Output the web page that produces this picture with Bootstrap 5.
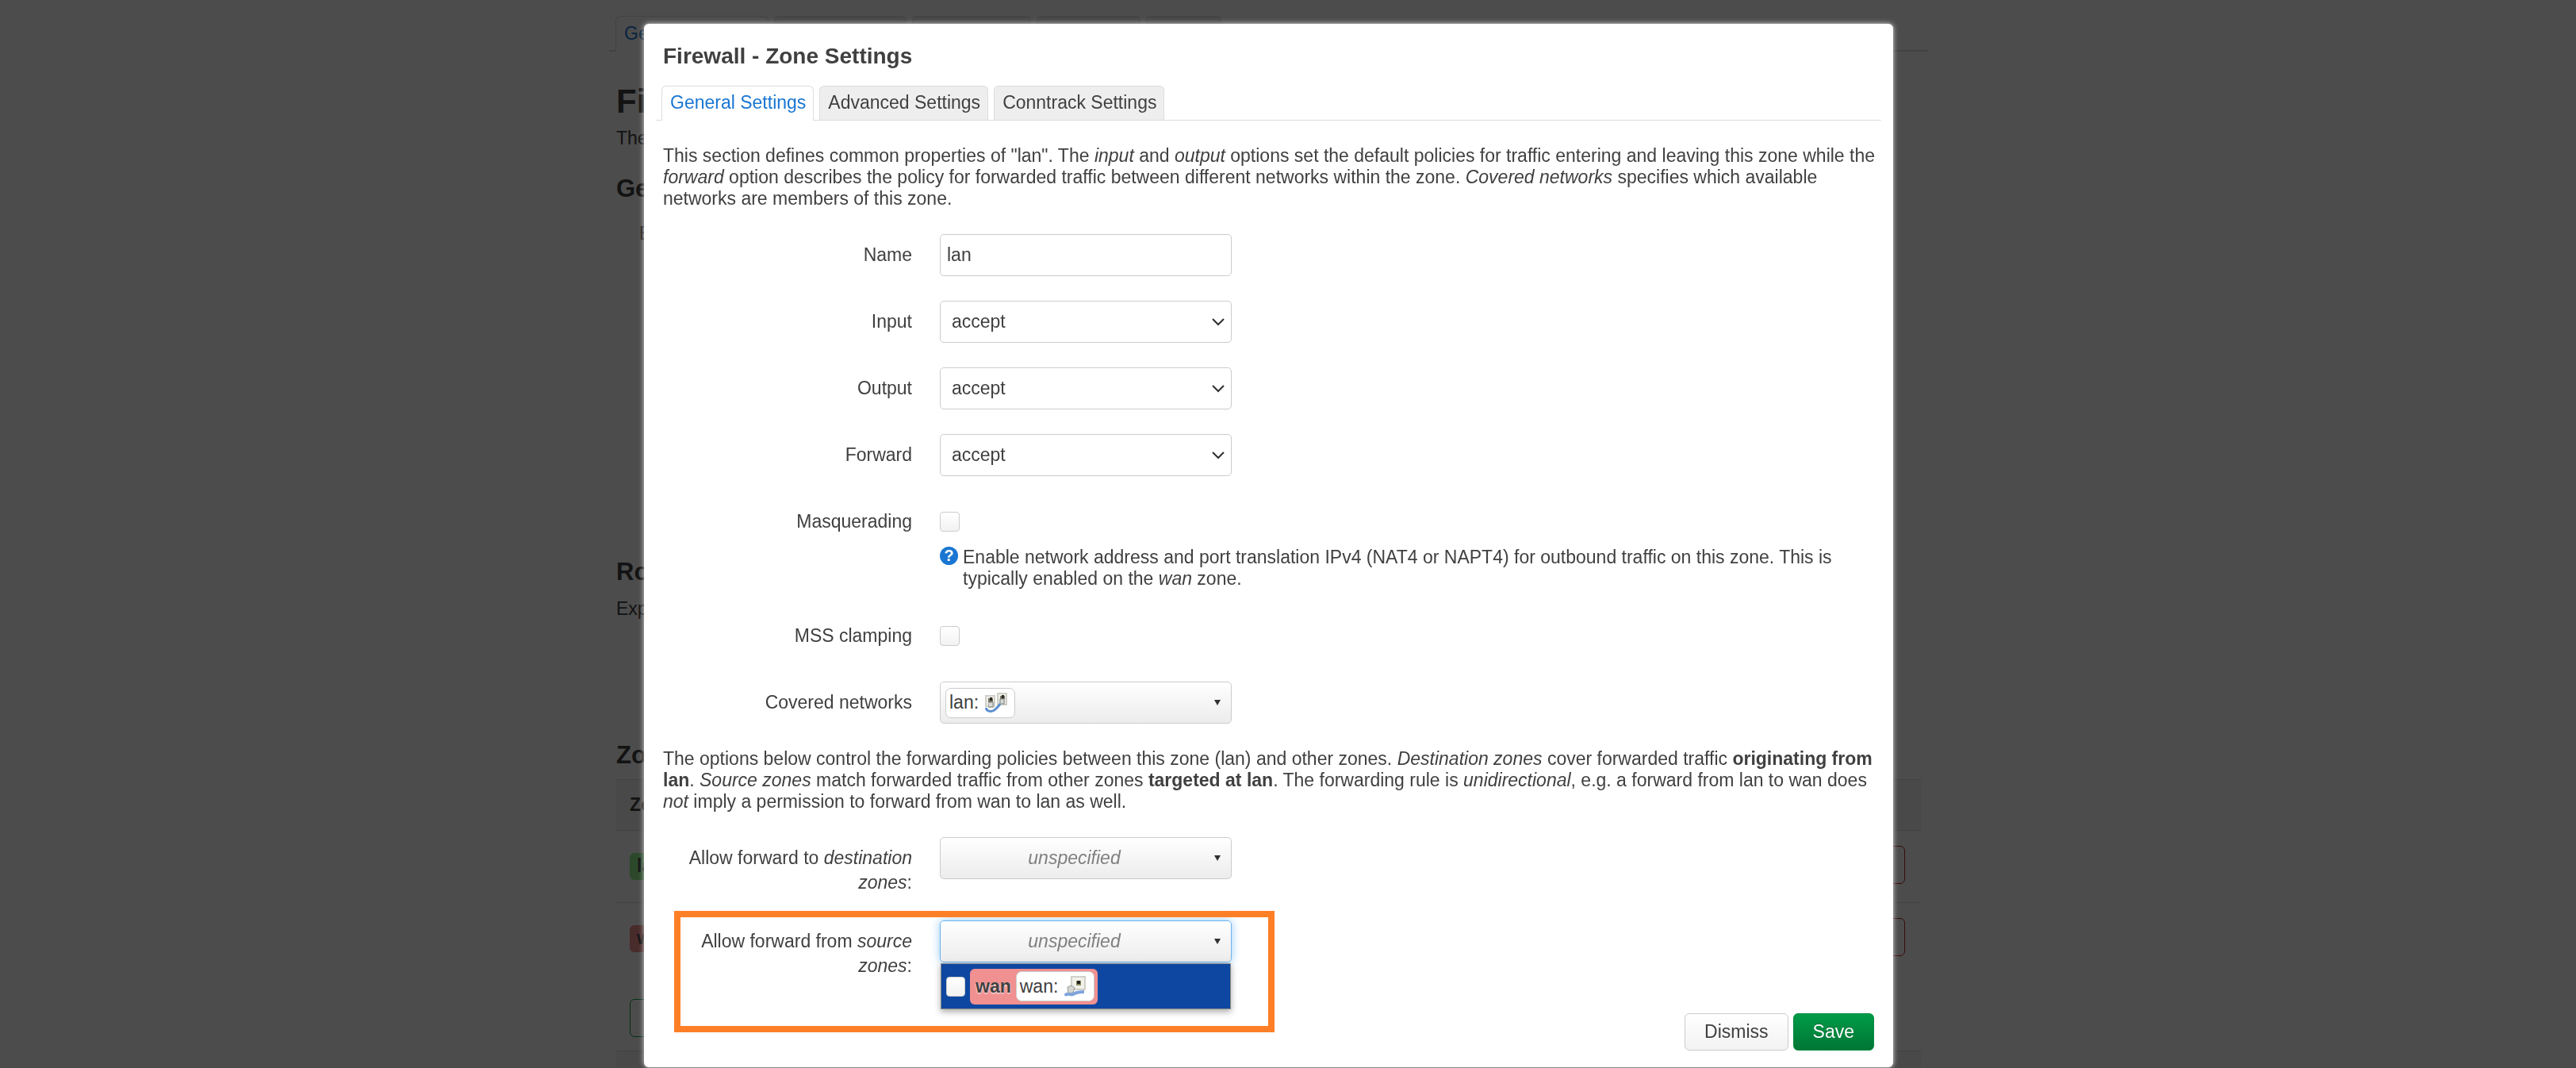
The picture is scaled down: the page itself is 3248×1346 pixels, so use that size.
<!DOCTYPE html>
<html lang="en">
<head>
<meta charset="utf-8">
<meta name="viewport" content="width=device-width, initial-scale=1">
<title>Firewall - Zone Settings</title>
<link href="https://cdn.jsdelivr.net/npm/bootstrap@5.3.0/dist/css/bootstrap.min.css" rel="stylesheet">
<style>
body{font-family:"Liberation Sans",Arial,sans-serif;font-size:23px;line-height:27px;color:#404040;background:#fff;overflow:hidden;height:100vh}
p{margin:0 0 31px}
.frame-pad{padding-right:49px}
.page-wrap{max-width:1645px;margin:0 auto;padding-top:20px}
.lu-tabs{border-bottom:2px solid #ddd;gap:7px;margin:0 -9px;padding-left:8px}
.lu-tabs .nav-link{border:1px solid #ddd;border-bottom:0;border-radius:6px 6px 0 0;background:#eee;color:#404040;padding:8px 10px 7px;line-height:27px;margin:0}
.lu-tabs .nav-link.active{background:#fff;color:#1976d2;margin-bottom:-2px;padding-bottom:9px}
.dlg .lu-tabs{border-bottom-width:1px;margin:0 -9px 31px;padding-left:7px}
.dlg .lu-tabs .nav-link{padding:7px 9px 8px 10px}
.dlg .lu-tabs .nav-link.active{margin-bottom:-1px;padding-bottom:9px}
.page-title{font-size:42px;line-height:50px;font-weight:700;margin:38px 0 8px}
.sect-title{font-size:31px;line-height:36px;font-weight:700;margin:0}
.intro{margin-bottom:32px}
.flag-row{margin:25px 0 395px 29px}
.note{margin:15px 0 153px}
.zone-table{margin:12px 0 0;--bs-table-bg:transparent;color:#404040}
.zone-table td,.zone-table th{border-top:1px solid #ddd;border-bottom:0;padding:19px 20px 19px 17px;vertical-align:middle}
.zone-table th{background:#f5f5f5;height:64px;padding:0 17px}
.zone-table tr.entry td{height:87px}
.zone-tag{display:inline-block;border-radius:6px;padding:3px 9px 4px;font-weight:700}
.zone-tag.green{background:#90f090}
.zone-tag.red{background:#f09090}
.ghost-btn{background:#fff;border:1px solid #c0281f;border-radius:6px;height:48px;width:120px}
.ghost-btn.add{border-color:#00a04a}
.add-row{padding:31px 17px 17px}
.action-band{background:#f5f5f5;border-top:1px solid #ddd;height:64px}
.veil{position:fixed;inset:0;background:rgba(0,0,0,.7)}
.dlg-host{position:fixed;inset:0;padding:30px 49px 0 0;overflow:hidden}
.dlg{max-width:1575px;margin:0 auto;background:#fff;border-radius:6px;padding:23px 24px 21px;box-shadow:0 0 6px rgba(255,255,255,.8)}
.dlg h1{font-size:28px;line-height:36px;font-weight:700;margin:0 0 19px}
.dlg p{margin-right:-10px}
.opt{display:flex;gap:35px;margin-bottom:31px;min-height:53px}
.opt-name{flex:0 0 314px;text-align:right;line-height:31px;padding:11px 0 1px}
.opt-body{flex:1 1 0;position:relative}
.ctl{width:368px;height:53px;border:1px solid #ccc;border-radius:5px;color:#404040;font-size:23px;line-height:27px;padding:12px 8px;display:block}
select.ctl{padding:12px 40px 12px 14px;background:#fff url("data:image/svg+xml,%3Csvg xmlns='http://www.w3.org/2000/svg' viewBox='0 0 16 10'%3E%3Cpath fill='none' stroke='%23303030' stroke-width='2' d='M1 1l7 7 7-7'/%3E%3C/svg%3E") no-repeat right 8px center/16px 10px}
.combo{background:linear-gradient(#fff,#ececec);display:flex;align-items:center;padding:0 13px 0 6px;text-align:left}
.combo.open{border-color:#6cb2ee;box-shadow:0 0 12px rgba(82,168,236,.6)}
.combo .ph{flex:1;text-align:center;font-style:italic;color:#808080;padding-right:14px}
.caret{width:8px;height:7px;background:#303030;clip-path:polygon(0 0,100% 0,50% 100%);margin-left:auto}
.tick{appearance:none;display:block;width:25px;height:25px;border:1px solid #ccc;border-radius:4px;background:linear-gradient(#fff,#f2f2f2);margin:0;flex:none}
.opt-body>.tick{margin:14px 0}
.opt-body>.tick+.hint{margin-top:19px}
.hint{max-width:1150px;gap:6px;padding-bottom:1px}
.q{flex:0 0 23px;height:23px;line-height:23px;border-radius:50%;background:#1976d2;color:#fff;font-size:20px;font-weight:700;text-align:center}
.net{display:inline-flex;align-items:center;gap:8px;height:38px;border:1px solid #ccc;border-radius:7px;background:#fff;padding:0 9px 0 4px;color:#404040;line-height:27px}
.net svg{width:28px;height:28px}
.pick{position:absolute;z-index:2;left:1px;top:54px;width:366px;height:58px;background:#0d47a1;border:1px solid #888;box-shadow:0 3px 8px rgba(0,0,0,.35);padding:0 6px;gap:6px}
.pick .tick{width:24px}
.zone-chip{height:45px;border-radius:6px;background:#f09090;padding:0 4px 0 7px;gap:6px;font-weight:700;text-shadow:0 1px 2px #fff}
.zone-chip .net{font-weight:400;text-shadow:none}
.marked{position:relative}
.marker{position:absolute;z-index:3;left:14px;top:-12px;width:757px;height:153px;border:8px solid #ff7f27;pointer-events:none}
.foot{padding-top:12px;gap:6px}
.foot .btn{font-size:23px;line-height:27px;padding:9px 24px;border-radius:6px;border:1px solid #ccc;color:#404040;background:linear-gradient(#fff,#f2f2f2)}
.foot .btn.go{color:#fff;border-color:#008a3e;background:linear-gradient(#009c48,#007635);text-shadow:0 -1px 0 rgba(0,0,0,.25)}
</style>
<script src="https://cdn.jsdelivr.net/npm/bootstrap@5.3.0/dist/js/bootstrap.bundle.min.js"></script>
</head>
<body>
<div class="frame-pad">
  <main class="page-wrap">
    <nav class="nav lu-tabs" aria-label="Firewall pages">
      <a class="nav-link active" href="#">General Settings</a>
      <a class="nav-link" href="#">Port Forwards</a>
      <a class="nav-link" href="#">Traffic Rules</a>
      <a class="nav-link" href="#">NAT Rules</a>
      <a class="nav-link" href="#">IP Sets</a>
    </nav>
    <h2 class="page-title">Firewall</h2>
    <p class="intro">The firewall</p>
    <h3 class="sect-title">General</h3>
    <p class="flag-row">Enable</p>
    <h3 class="sect-title">Routing</h3>
    <p class="note">Experimental</p>
    <h3 class="sect-title">Zones</h3>
    <table class="table zone-table">
      <thead><tr><th>Zone</th><th></th></tr></thead>
      <tbody>
        <tr class="entry"><td><span class="zone-tag green">lan</span></td><td class="text-end"><button class="ghost-btn" type="button" aria-label="Delete lan"></button></td></tr>
        <tr class="entry"><td><span class="zone-tag red">wan</span></td><td class="text-end"><button class="ghost-btn" type="button" aria-label="Delete wan"></button></td></tr>
      </tbody>
    </table>
    <div class="add-row d-flex"><button class="ghost-btn add" type="button" aria-label="Add"></button></div>
    <div class="action-band"></div>
  </main>
</div>
<div class="veil"></div>
<div class="dlg-host">
  <section class="dlg" role="dialog" aria-labelledby="dlg-title">
    <h1 id="dlg-title">Firewall - Zone Settings</h1>
    <nav class="nav lu-tabs" aria-label="Zone settings">
      <a class="nav-link active" href="#">General Settings</a>
      <a class="nav-link" href="#">Advanced Settings</a>
      <a class="nav-link" href="#">Conntrack Settings</a>
    </nav>
    <p>This section defines common properties of "lan". The <em>input</em> and <em>output</em> options set the default policies for traffic entering and leaving this zone while the <em>forward</em> option describes the policy for forwarded traffic between different networks within the zone. <em>Covered networks</em> specifies which available networks are members of this zone.</p>
    <div class="opt"><label class="opt-name" for="f-name">Name</label><div class="opt-body"><input id="f-name" class="ctl" type="text" value="lan"></div></div>
    <div class="opt"><label class="opt-name" for="f-in">Input</label><div class="opt-body"><select id="f-in" class="form-select ctl"><option>accept</option></select></div></div>
    <div class="opt"><label class="opt-name" for="f-out">Output</label><div class="opt-body"><select id="f-out" class="form-select ctl"><option>accept</option></select></div></div>
    <div class="opt"><label class="opt-name" for="f-fwd">Forward</label><div class="opt-body"><select id="f-fwd" class="form-select ctl"><option>accept</option></select></div></div>
    <div class="opt"><label class="opt-name" for="f-masq">Masquerading</label><div class="opt-body"><input id="f-masq" class="tick" type="checkbox">
      <div class="hint d-flex"><span class="q">?</span><span>Enable network address and port translation IPv4 (NAT4 or NAPT4) for outbound traffic on this zone. This is typically enabled on the <em>wan</em> zone.</span></div></div></div>
    <div class="opt"><label class="opt-name" for="f-mss">MSS clamping</label><div class="opt-body"><input id="f-mss" class="tick" type="checkbox"></div></div>
    <div class="opt"><label class="opt-name" for="f-net">Covered networks</label><div class="opt-body">
      <button id="f-net" class="ctl combo" type="button"><span class="net">lan:
        <svg viewBox="0 0 28 28" aria-hidden="true">
          <path d="M0 4h13v15H0zM15 1h13v16H15z" fill="#cfcfc8"/>
          <path d="M2 6h9v11H2zM17 3h9v12h-9z" fill="#efefe8"/>
          <path d="M4 8h6v5H4zM19 5h6v5h-6z" fill="#77776a"/>
          <path d="M6 7h3v4H6zM21 4h3v4h-3z" fill="#2c2c22"/>
          <path d="M4 13h7v7H4zM18 9h7v7h-7z" fill="#a9ada9"/>
          <path d="M5 14h4v4H5zM20 10h3v4h-3z" fill="#d9dcd9"/>
          <path d="M1 20c1 5 8 6 12 2s5-5 6-7" fill="none" stroke="#5b8fd0" stroke-width="3"/></svg></span><span class="caret"></span></button></div></div>
    <p>The options below control the forwarding policies between this zone (lan) and other zones. <em>Destination zones</em> cover forwarded traffic <strong>originating from lan</strong>. <em>Source zones</em> match forwarded traffic from other zones <strong>targeted at lan</strong>. The forwarding rule is <em>unidirectional</em>, e.g. a forward from lan to wan does <em>not</em> imply a permission to forward from wan to lan as well.</p>
    <div class="opt"><label class="opt-name" for="f-dst">Allow forward to <em>destination zones</em>:</label><div class="opt-body">
      <button id="f-dst" class="ctl combo" type="button"><span class="ph">unspecified</span><span class="caret"></span></button></div></div>
    <div class="opt marked"><label class="opt-name" for="f-src">Allow forward from <em>source zones</em>:</label><div class="opt-body">
      <button id="f-src" class="ctl combo open" type="button"><span class="ph">unspecified</span><span class="caret"></span></button>
      <div class="pick d-flex align-items-center"><input id="z-wan" class="tick" type="checkbox"><label class="zone-chip d-flex align-items-center" for="z-wan">wan <span class="net">wan:
        <svg viewBox="0 0 28 28" aria-hidden="true">
          <rect x="8" y="1" width="19" height="18" fill="#d0d0c8"/>
          <rect x="10" y="3" width="15" height="14" fill="#f1f1ea"/>
          <path d="M15 7h6v6h-6z" fill="#8d8d60"/>
          <path d="M16 7h4v4h-4z" fill="#23231c"/>
          <path d="M4 15l5-2 4 3-2 6-6 1z" fill="#d4d7d4" stroke="#969a96"/>
          <path d="M1 26c2-5 7 0 10-2s6-3 14-3" fill="none" stroke="#7fa4dc" stroke-width="4"/></svg></span></label></div>
    </div><div class="marker"></div></div>
    <div class="foot d-flex justify-content-end"><button class="btn" type="button">Dismiss</button><button class="btn go" type="button">Save</button></div>
  </section>
</div>
</body>
</html>
